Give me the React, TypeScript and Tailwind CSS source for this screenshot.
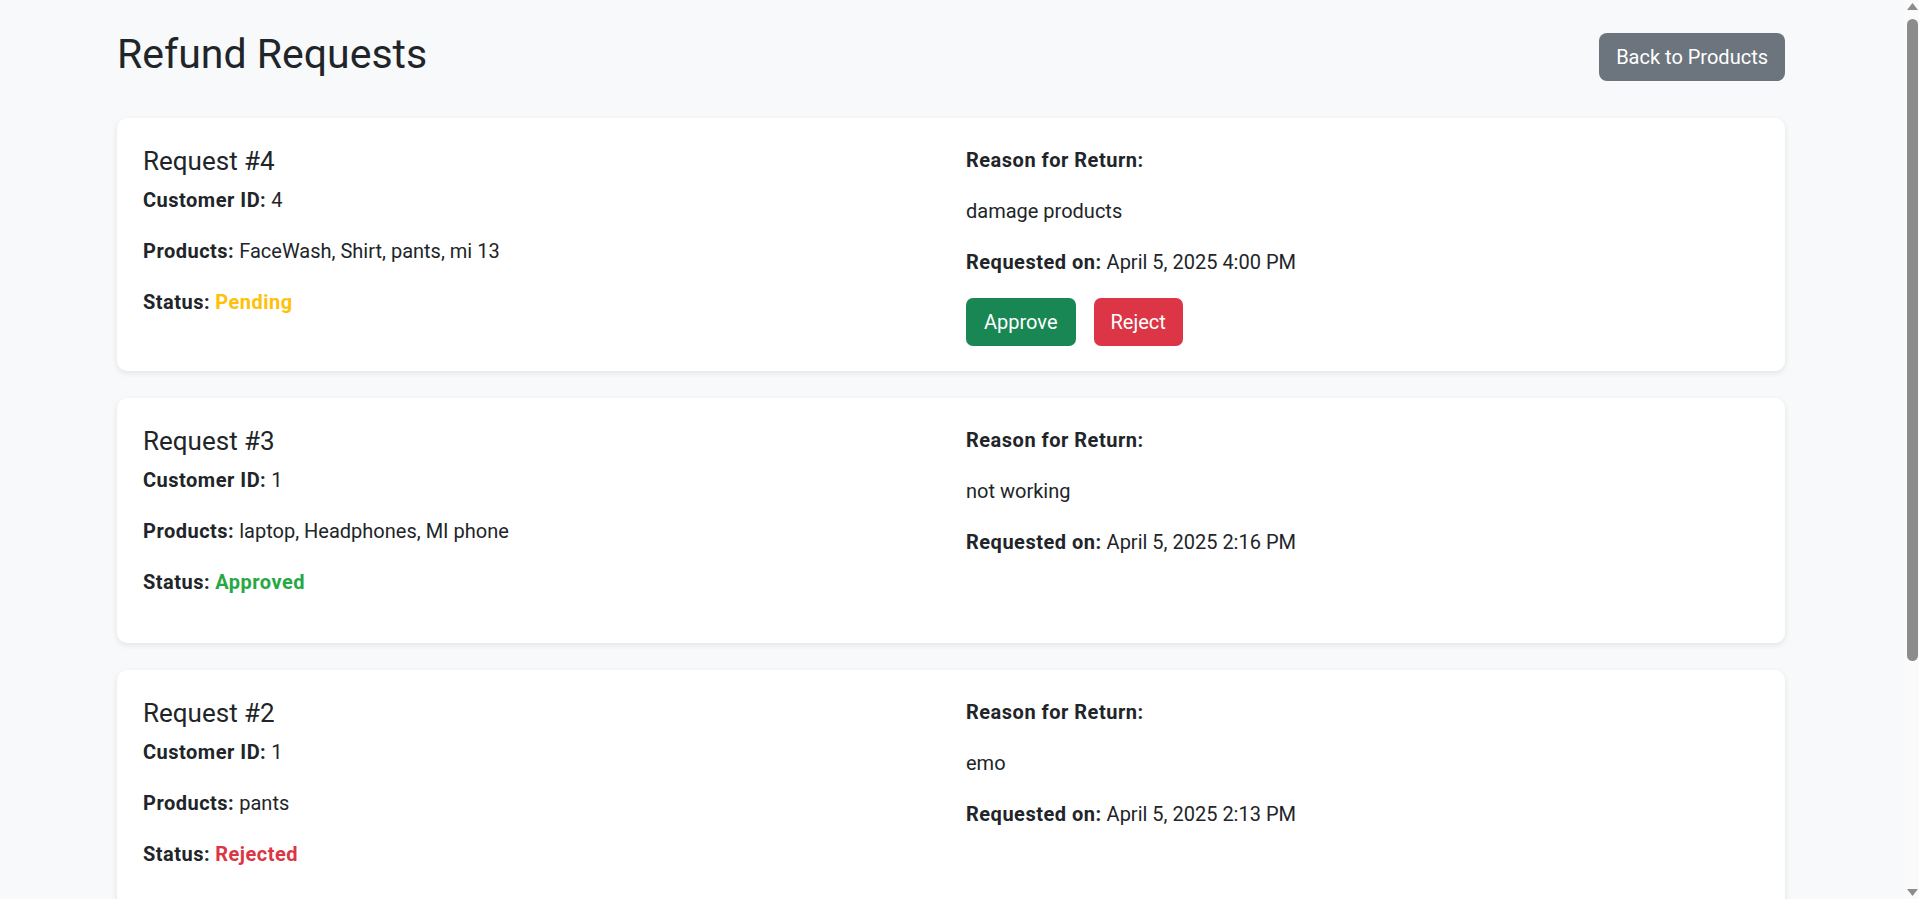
import React from 'react';

type RefundStatus = 'Pending' | 'Approved' | 'Rejected';

interface RefundRequest {
  id: number;
  customerId: number;
  products: string[];
  status: RefundStatus;
  reason: string;
  requestedOn: string;
}

const requests: RefundRequest[] = [
  {
    id: 4,
    customerId: 4,
    products: ['FaceWash', 'Shirt', 'pants', 'mi 13'],
    status: 'Pending',
    reason: 'damage products',
    requestedOn: 'April 5, 2025 4:00 PM',
  },
  {
    id: 3,
    customerId: 1,
    products: ['laptop', 'Headphones', 'MI phone'],
    status: 'Approved',
    reason: 'not working',
    requestedOn: 'April 5, 2025 2:16 PM',
  },
  {
    id: 2,
    customerId: 1,
    products: ['pants'],
    status: 'Rejected',
    reason: 'emo',
    requestedOn: 'April 5, 2025 2:13 PM',
  },
  {
    id: 1,
    customerId: 2,
    products: ['Shirt'],
    status: 'Approved',
    reason: 'wrong size',
    requestedOn: 'April 4, 2025 6:42 PM',
  },
];

const statusColor: Record<RefundStatus, string> = {
  Pending: 'text-[#ffc107]',
  Approved: 'text-[#28a745]',
  Rejected: 'text-[#dc3545]',
};

const Label: React.FC<{ children: React.ReactNode }> = ({ children }) => (
  <strong className="font-bold tracking-[0.5px]">{children}</strong>
);

const RequestCard: React.FC<{ request: RefundRequest }> = ({ request }) => {
  const isPending = request.status === 'Pending';

  return (
    <div className="bg-white rounded-[10px] shadow-[0_2px_6px_rgba(0,0,0,0.09)] px-[26px] pt-[28px] pb-[25px]">
      <div className="grid grid-cols-2 gap-x-[30px]">
        {/* Left: request details */}
        <div>
          <h5 className="text-[26px] leading-[30px] font-normal mb-[9px]">Request #{request.id}</h5>
          <p className="mb-[21px]">
            <Label>Customer ID:</Label> {request.customerId}
          </p>
          <p className="mb-[21px]">
            <Label>Products:</Label> {request.products.join(', ')}
          </p>
          <p className="mb-[21px]">
            <Label>Status:</Label>{' '}
            <span className={`font-bold tracking-[0.5px] ${statusColor[request.status]}`}>{request.status}</span>
          </p>
        </div>

        {/* Right: reason + actions */}
        <div className="-mt-[1px]">
          <p className="mb-[21px]">
            <Label>Reason for Return:</Label>
          </p>
          <p className="mb-[21px]">{request.reason}</p>
          <p className={isPending ? 'mb-[21px]' : 'mb-[20px]'}>
            <Label>Requested on:</Label> {request.requestedOn}
          </p>
          {isPending && (
            <div className="flex gap-[18px]">
              <button className="h-[48px] px-[18px] rounded-[7px] bg-[#198754] text-white text-[20px]">
                Approve
              </button>
              <button className="h-[48px] px-[17px] rounded-[7px] bg-[#dc3545] text-white text-[20px]">
                Reject
              </button>
            </div>
          )}
        </div>
      </div>
    </div>
  );
};

const ScrollTrack: React.FC = () => (
  <aside className="w-[15px] shrink-0 sticky top-0 h-screen bg-[#fafafa] flex flex-col items-center">
    <svg className="mt-[3px] ml-[2px]" width="11" height="7" viewBox="0 0 11 7">
      <path d="M5.5 0 L11 7 L0 7 Z" fill="#8c8c8c" />
    </svg>
    <div className="mt-[9px] ml-[2px] w-[11px] h-[642px] rounded-full bg-[#8c8c8c]" />
    <div className="flex-1" />
    <svg className="mb-[3px] ml-[2px]" width="11" height="7" viewBox="0 0 11 7">
      <path d="M0 0 L11 0 L5.5 7 Z" fill="#8c8c8c" />
    </svg>
  </aside>
);

export default function App() {
  return (
    <div className="flex items-start min-h-screen bg-[#f8f9fa] text-[#212529] text-[20px] leading-[30px] font-['Roboto',sans-serif]">
      <main className="flex-1 min-w-0">
        <div className="w-[1668px] ml-[117px] pt-[30px] pb-[30px]">
          <div className="flex justify-between items-center mb-[34px]">
            <h1 className="text-[41px] leading-[48px] font-normal mb-[6px]">Refund Requests</h1>
            <button className="h-[48px] px-[17px] rounded-[8px] bg-[#6c757d] text-white text-[20px]">
              Back to Products
            </button>
          </div>

          <div className="flex flex-col gap-[27px]">
            {requests.map((r) => (
              <RequestCard key={r.id} request={r} />
            ))}
          </div>
        </div>
      </main>
      <ScrollTrack />
    </div>
  );
}
